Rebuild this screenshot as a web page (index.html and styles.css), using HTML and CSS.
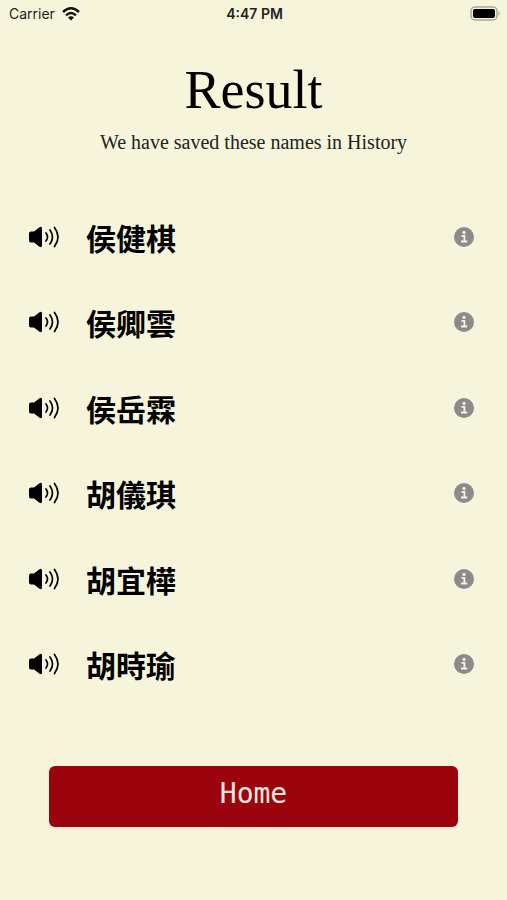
FILE: index.html
```
<!DOCTYPE html>
<html lang="en">
<head>
    <meta charset="UTF-8">
    <meta name="viewport" content="width=device-width, initial-scale=1.0">
    <title>Result</title>
    <link rel="stylesheet" href="styles.css">
</head>
<body>
    <svg width="0" height="0" class="sprite" aria-hidden="true">
        <symbol id="speaker" viewBox="0 0 32 24">
            <path d="M1 8.500 Q1 6.500 3 6.500 H6 L11.500 2.300 Q14 1 14 3.500 V20.500 Q14 23 11.500 21.700 L6 17.500 H3 Q1 17.500 1 15.500 Z"/>
            <path d="M18 8 Q21 12 18 16 M22 5 Q27 12 22 19 M26.500 2.500 Q33.500 12 26.500 21.500" fill="none" stroke="#000" stroke-width="1.700" stroke-linecap="round"/>
        </symbol>
        <symbol id="info" viewBox="0 0 20 20">
            <circle cx="10" cy="10" r="10" fill="#8b8b8b"/>
            <circle cx="10" cy="5.400" r="1.600" fill="#f6f5db"/>
            <path d="M7.500 8.900 H10.400 V14.500 M7 14.500 H13.200" fill="none" stroke="#f6f5db" stroke-width="1.800"/>
        </symbol>
    </svg>
    <header class="status">
        <div class="carrier">
            <span>Carrier</span>
            <svg class="wifi" viewBox="0 0 20 15" aria-hidden="true">
                <path d="M2 6 Q10 -1.500 18 6 M5 9.300 Q10 4.800 15 9.300" fill="none" stroke="#111" stroke-width="2.400"/>
                <path d="M7 11.500 Q10 9 13 11.500 L10 14.500 Z" fill="#111"/>
            </svg>
        </div>
        <span class="time">4:47 PM</span>
        <svg class="battery" viewBox="0 0 30 15" aria-hidden="true">
            <rect x="1" y="1" width="26" height="13" rx="4" fill="none" stroke="#aaa995" stroke-width="1.500"/>
            <rect x="3" y="3" width="22" height="9" rx="2"/>
            <path d="M28.500 5 Q31 7.500 28.500 10 Z" fill="#aaa995"/>
        </svg>
    </header>
    <main class="container">
        <h1 class="title">Result</h1>
        <p class="subtitle">We have saved these names in History</p>
        <ul class="names">
            <li class="row">
                <button type="button" class="icon-btn" aria-label="Play 侯健棋"><svg class="speaker"><use href="#speaker"/></svg></button>
                <span class="name" lang="zh-Hant">侯健棋</span>
                <button type="button" class="icon-btn" aria-label="About 侯健棋"><svg class="info"><use href="#info"/></svg></button>
            </li>
            <li class="row">
                <button type="button" class="icon-btn" aria-label="Play 侯卿雲"><svg class="speaker"><use href="#speaker"/></svg></button>
                <span class="name" lang="zh-Hant">侯卿雲</span>
                <button type="button" class="icon-btn" aria-label="About 侯卿雲"><svg class="info"><use href="#info"/></svg></button>
            </li>
            <li class="row">
                <button type="button" class="icon-btn" aria-label="Play 侯岳霖"><svg class="speaker"><use href="#speaker"/></svg></button>
                <span class="name" lang="zh-Hant">侯岳霖</span>
                <button type="button" class="icon-btn" aria-label="About 侯岳霖"><svg class="info"><use href="#info"/></svg></button>
            </li>
            <li class="row">
                <button type="button" class="icon-btn" aria-label="Play 胡儀琪"><svg class="speaker"><use href="#speaker"/></svg></button>
                <span class="name" lang="zh-Hant">胡儀琪</span>
                <button type="button" class="icon-btn" aria-label="About 胡儀琪"><svg class="info"><use href="#info"/></svg></button>
            </li>
            <li class="row">
                <button type="button" class="icon-btn" aria-label="Play 胡宜樺"><svg class="speaker"><use href="#speaker"/></svg></button>
                <span class="name" lang="zh-Hant">胡宜樺</span>
                <button type="button" class="icon-btn" aria-label="About 胡宜樺"><svg class="info"><use href="#info"/></svg></button>
            </li>
            <li class="row">
                <button type="button" class="icon-btn" aria-label="Play 胡時瑜"><svg class="speaker"><use href="#speaker"/></svg></button>
                <span class="name" lang="zh-Hant">胡時瑜</span>
                <button type="button" class="icon-btn" aria-label="About 胡時瑜"><svg class="info"><use href="#info"/></svg></button>
            </li>
        </ul>
        <button type="button" class="home">Home</button>
    </main>
</body>
</html>
```

FILE: styles.css
```
* {
    margin: 0;
    padding: 0;
    box-sizing: border-box;
}
body {
    background-color: #f6f5db;
    color: #000;
    font-family: 'Liberation Serif', serif;
}
svg {
    display: block;
}
.sprite {
    position: absolute;
}
.status {
    display: grid;
    grid-template-columns: 1fr auto 1fr;
    align-items: center;
    height: 26px;
    padding: 0 7px 0 9px;
    font-family: Inter, sans-serif;
    font-size: 14px;
    color: #222;
}
.carrier {
    display: flex;
    align-items: center;
    gap: 6px;
}
.wifi {
    width: 20px;
    height: 15px;
}
.time {
    font-weight: 600;
}
.battery {
    width: 30px;
    height: 15px;
    justify-self: end;
}
.container {
    padding: 32px 0 48px;
    text-align: center;
}
.title {
    font-size: 54px;
    font-weight: 400;
    line-height: 64px;
}
.subtitle {
    margin-top: 8px;
    font-size: 20px;
    line-height: 24px;
    color: #222;
}
.names {
    display: grid;
    grid-auto-rows: 1fr;
    min-height: 513px;
    margin-top: 40px;
    padding: 0 33px 0 28px;
    list-style: none;
}
.row {
    display: flex;
    align-items: center;
    gap: 26px;
}
.icon-btn {
    border: none;
    background: none;
    cursor: pointer;
}
.speaker {
    width: 32px;
    height: 24px;
}
.info {
    width: 20px;
    height: 20px;
}
.name {
    flex: 1;
    font-family: 'Noto Sans CJK TC', sans-serif;
    font-size: 30px;
    font-weight: 700;
    line-height: 40px;
    text-align: left;
}
.home {
    display: block;
    width: calc(100% - 98px);
    margin: 59px auto 0;
    padding: 10px 0 15px;
    border: none;
    border-radius: 6px;
    background-color: #9b040d;
    color: #fbe9e0;
    font-family: 'DejaVu Sans Mono', monospace;
    font-size: 28px;
    line-height: 36px;
    cursor: pointer;
}
```
